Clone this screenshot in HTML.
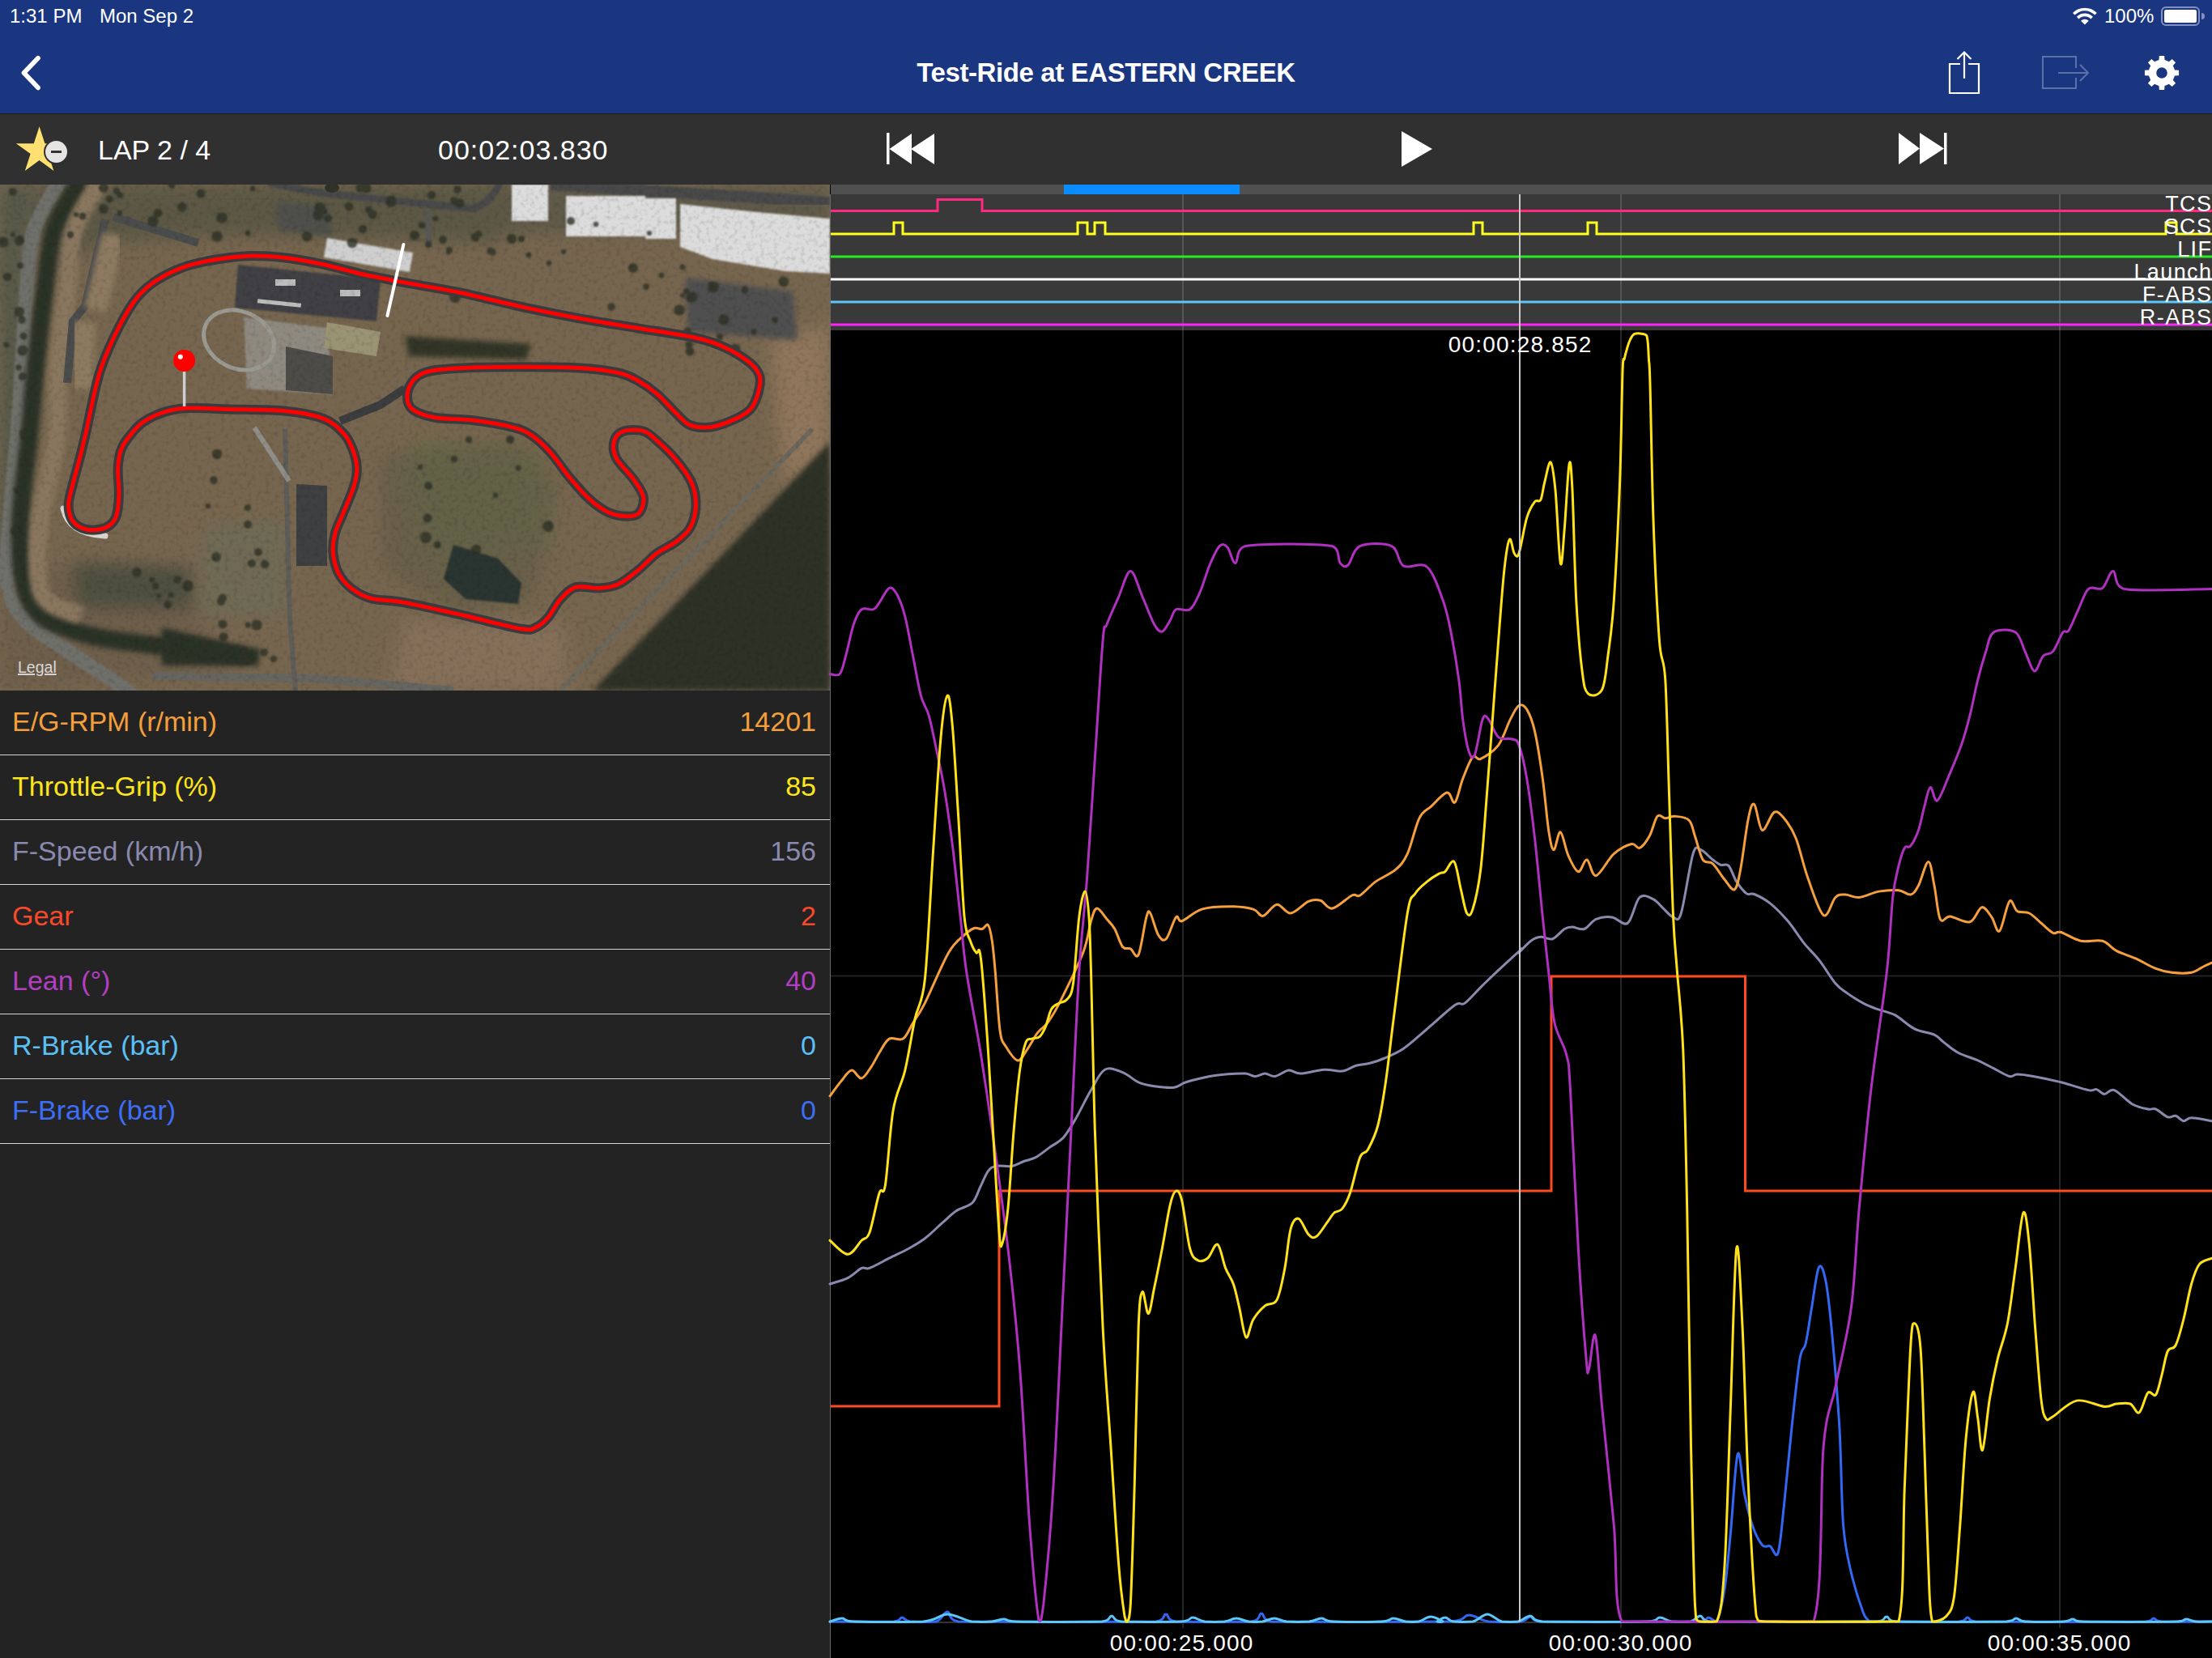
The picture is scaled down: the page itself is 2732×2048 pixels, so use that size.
<!DOCTYPE html>
<html><head><meta charset="utf-8">
<style>
html,body{margin:0;padding:0;}
body{width:2732px;height:2048px;overflow:hidden;position:relative;background:#232323;font-family:"Liberation Sans",sans-serif;}
.abs{position:absolute;}
#hdr{left:0;top:0;width:2732px;height:140px;background:#1b3680;}
#tb{left:0;top:140px;width:2732px;height:88px;background:#303030;border-top:1px solid #1e1e1e;box-sizing:border-box;}
.st{color:#fff;font-size:24px;top:6px;white-space:nowrap;line-height:28px;}
#title{color:#fff;font-size:33px;letter-spacing:-0.4px;font-weight:bold;top:70px;left:0;width:2732px;text-align:center;line-height:40px;}
.tbt{color:#fff;font-size:34px;line-height:40px;white-space:nowrap;top:165px;}
#map{left:0;top:228px;width:1025px;height:625px;overflow:hidden;}
#list{left:0;top:853px;width:1025px;}
.row{position:relative;height:79px;border-bottom:1px solid #d8d8d8;}
.row span{position:absolute;top:18px;font-size:34px;line-height:40px;white-space:nowrap;}
.row .l{left:15px;}
.row .r{right:17px;}
#chart{left:1025px;top:228px;width:1707px;height:1820px;background:#000;}
</style></head>
<body>
<div id="hdr" class="abs"></div>
<div class="abs st" style="left:12px;">1:31 PM</div>
<div class="abs st" style="left:123px;">Mon Sep 2</div>
<div class="abs st" style="left:2599px;">100%</div>
<svg class="abs" style="left:0;top:0" width="2732" height="140" viewBox="0 0 2732 140">
  <!-- back chevron -->
  <polyline points="47,71.8 29.5,90 47,108.3" fill="none" stroke="#fff" stroke-width="5.8" stroke-linecap="round" stroke-linejoin="round"/>
  <!-- wifi -->
  <path fill="#fff" d="M2574.90,30.50 L2570.01,25.78 A6.80,6.80 0 0 1 2579.79,25.78 Z M2564.83,20.77 A14.00,14.00 0 0 1 2584.97,20.77 L2582.24,23.41 A10.20,10.20 0 0 0 2567.56,23.41 Z M2559.94,16.05 A20.80,20.80 0 0 1 2589.86,16.05 L2587.27,18.55 A17.20,17.20 0 0 0 2562.53,18.55 Z"/>
  <!-- battery -->
  <rect x="2670" y="9" width="46" height="22" rx="5" ry="5" fill="none" stroke="#8190bf" stroke-width="2"/>
  <rect x="2673" y="12" width="40" height="16" rx="2.5" ry="2.5" fill="#fff"/>
  <path d="M2719,16 A4,4 0 0 1 2719,24 Z" fill="#8190bf"/>
  <!-- share -->
  <g fill="none" stroke="#fff" stroke-width="2.2">
    <path d="M2421,79 L2408,79 L2408,115 L2444,115 L2444,79 L2431,79"/>
    <path d="M2426,97 L2426,65"/>
    <path d="M2417.5,73 L2426,64.5 L2434.5,73"/>
  </g>
  <!-- export (disabled) -->
  <g fill="none" stroke="#5d71a8" stroke-width="2">
    <path d="M2564,84 L2564,70 L2523,70 L2523,109 L2564,109 L2564,96"/>
    <path d="M2542,90 L2579,90"/>
    <path d="M2569,80 L2579,90 L2569,100"/>
  </g>
  <!-- gear -->
  <g transform="translate(2670,90)">
    <path id="gearp" fill="#fff" fill-rule="evenodd" d="M-3.53,-15.91 L-3.15,-21.07 L3.15,-21.07 L3.53,-15.91 A18.75,18.75 0 0 1 8.76,-13.75 L12.67,-17.12 L17.12,-12.67 L13.75,-8.76 A18.75,18.75 0 0 1 15.91,-3.53 L21.07,-3.15 L21.07,3.15 L15.91,3.53 A18.75,18.75 0 0 1 13.75,8.76 L17.12,12.67 L12.67,17.12 L8.76,13.75 A18.75,18.75 0 0 1 3.53,15.91 L3.15,21.07 L-3.15,21.07 L-3.53,15.91 A18.75,18.75 0 0 1 -8.76,13.75 L-12.67,17.12 L-17.12,12.67 L-13.75,8.76 A18.75,18.75 0 0 1 -15.91,3.53 L-21.07,3.15 L-21.07,-3.15 L-15.91,-3.53 A18.75,18.75 0 0 1 -13.75,-8.76 L-17.12,-12.67 L-12.67,-17.12 L-8.76,-13.75 A18.75,18.75 0 0 1 -3.53,-15.91 Z M6.80,0 A6.80,6.80 0 1 0 -6.80,0 A6.80,6.80 0 1 0 6.80,0Z"/>
  </g>
</svg>
<div id="title" class="abs">Test-Ride at EASTERN CREEK</div>

<div id="tb" class="abs"></div>
<svg class="abs" style="left:0;top:140px" width="2732" height="88" viewBox="0 140 2732 88">
  <!-- star -->
  <path fill="#ffe070" d="M48.60,156.30 L55.38,177.17 L77.32,177.17 L59.57,190.06 L66.35,210.93 L48.60,198.04 L30.85,210.93 L37.63,190.06 L19.88,177.17 L41.82,177.17Z"/>
  <circle cx="69.5" cy="187.5" r="15.5" fill="#303030"/>
  <circle cx="69.5" cy="187.5" r="13.5" fill="#e6e4e2"/>
  <rect x="63" y="186" width="13" height="3" fill="#333"/>
  <!-- rewind -->
  <rect x="1095" y="164" width="3.5" height="39" fill="#fff"/>
  <path fill="#fff" d="M1098.5,184 L1126,165 L1126,203 Z M1125,184 L1154,165 L1154,203 Z"/>
  <!-- play -->
  <path fill="#fff" d="M1731,162 L1769,184 L1731,206 Z"/>
  <!-- ff -->
  <path fill="#fff" d="M2345,164 L2371,183.5 L2345,203 Z M2371,164 L2401,183.5 L2371,203 Z"/>
  <rect x="2401" y="164" width="3.5" height="39" fill="#fff"/>
</svg>
<div class="abs tbt" style="left:121px;">LAP 2 / 4</div>
<div class="abs tbt" style="left:541px;letter-spacing:1px;">00:02:03.830</div>

<div id="map" class="abs"><svg width="1025" height="625" viewBox="0 228 1025 625" style="display:block">
<defs>
  <filter id="bl8" x="-20%" y="-20%" width="140%" height="140%"><feGaussianBlur stdDeviation="10"/></filter>
  <filter id="bl3" x="-20%" y="-20%" width="140%" height="140%"><feGaussianBlur stdDeviation="3"/></filter>
  <filter id="bl1"><feGaussianBlur stdDeviation="1.2"/></filter>
  <filter id="noise" x="0" y="0" width="100%" height="100%">
    <feTurbulence type="fractalNoise" baseFrequency="0.18" numOctaves="2" seed="4" result="t"/>
    <feColorMatrix type="matrix" values="0 0 0 0 0  0 0 0 0 0  0 0 0 0 0  0 0 0 -1.6 0.85" />
  </filter>
</defs>
<rect x="0" y="228" width="1025" height="625" fill="#77664f"/>
<!-- broad tonal regions -->
<g filter="url(#bl8)">
  <rect x="0" y="228" width="1025" height="60" fill="#5f5a48"/>
  <path d="M60,228 L640,228 L620,300 L300,290 L120,300 L70,340 Z" fill="#5b5845"/>
  <path d="M0,228 L30,228 L25,853 L0,853 Z" fill="#55584a"/>
  <path d="M512,542 L668,560 L680,674 L540,690 L500,600 Z" fill="#6b6a4c"/>
  <path d="M0,700 L90,700 L240,760 L300,830 L0,853 Z" fill="#6e5f4c"/>
  <path d="M500,765 L700,770 L700,853 L480,853 Z" fill="#85705a"/>
  <path d="M950,420 L1025,400 L1025,560 L970,600 Z" fill="#8f765c"/>
  <path d="M90,694 L235,700 L240,753 L95,750 Z" fill="#4f5040"/>
  <path d="M250,650 L350,640 L350,760 L250,760 Z" fill="#6f6a55"/>
</g>
<!-- forest -->
<g filter="url(#bl3)">
  <path d="M1025,546 L1025,853 L732,853 Z" fill="#2d3128"/>
</g>
<!-- highway + treeband -->
<path d="M75.0,222.0 C69.5,232.3 49.0,261.0 42.0,284.0 C35.0,307.0 35.5,331.7 33.0,360.0 C30.5,388.3 29.0,424.0 27.0,454.0 C25.0,484.0 23.5,508.7 21.0,540.0 C18.5,571.3 14.0,612.3 12.0,642.0 C10.0,671.7 6.0,697.5 9.0,718.0 C12.0,738.5 16.8,750.2 30.0,765.0 C43.2,779.8 68.7,793.7 88.0,807.0 C107.3,820.3 131.5,834.5 146.0,845.0 C160.5,855.5 170.2,865.8 175.0,870.0" fill="none" stroke="#70706b" stroke-width="18" filter="url(#bl1)"/>
<path d="M188,835 L388,838 L480,846 L560,853" fill="none" stroke="#66655f" stroke-width="10"/>
<path d="M100.0,222.0 C94.5,232.3 74.5,261.0 67.0,284.0 C59.5,307.0 58.8,331.7 55.0,360.0 C51.2,388.3 47.2,424.0 44.0,454.0 C40.8,484.0 39.2,508.7 36.0,540.0 C32.8,571.3 26.2,612.3 25.0,642.0 C23.8,671.7 25.2,698.7 29.0,718.0 C32.8,737.3 38.7,748.2 48.0,758.0 C57.3,767.8 71.3,771.8 85.0,777.0 C98.7,782.2 110.8,785.5 130.0,789.0 C149.2,792.5 168.3,794.2 200.0,798.0 C231.7,801.8 300.0,809.7 320.0,812.0" fill="none" stroke="#2b3126" stroke-width="22" filter="url(#bl3)"/>
<path d="M125.0,222.0 C119.5,232.3 99.0,261.0 92.0,284.0 C85.0,307.0 86.3,331.7 83.0,360.0 C79.7,388.3 74.2,424.0 72.0,454.0 C69.8,484.0 73.7,508.7 70.0,540.0 C66.3,571.3 53.7,612.3 50.0,642.0 C46.3,671.7 46.0,700.8 48.0,718.0 C50.0,735.2 53.3,738.0 62.0,745.0 C70.7,752.0 93.7,757.5 100.0,760.0" fill="none" stroke="#8a775e" stroke-width="22" filter="url(#bl3)"/>
<path d="M1003,530 L692,853" stroke="#6d685c" stroke-width="6" fill="none"/>
<path d="M352.0,530.0 C352.5,550.0 354.0,611.7 355.0,650.0 C356.0,688.3 356.3,726.2 358.0,760.0 C359.7,793.8 363.8,837.5 365.0,853.0" fill="none" stroke="#5e5d58" stroke-width="6"/>
<!-- top road -->
<path d="M332,226 Q380,236 411,240 L585,258 Q605,250 618,226" stroke="#4a4a4a" stroke-width="9" fill="none" filter="url(#bl1)"/>
<path d="M340,250 L405,255 L410,292 L345,285 Z" fill="#4f4f4c" filter="url(#bl3)"/>
<path d="M528,258 L530,305" stroke="#575754" stroke-width="7" fill="none"/>
<path d="M680,228 L1025,250" stroke="#4a4a4a" stroke-width="14" fill="none" filter="url(#bl1)"/>
<ellipse cx="410" cy="232" rx="9" ry="6" fill="#2f3328"/>
<!-- drag strip -->
<path d="M130,271 L105,378 L90,397 L83,473" stroke="#4b4c4c" stroke-width="10" fill="none"/>
<path d="M140,268 L245,300" stroke="#4b4c4c" stroke-width="10" fill="none"/>
<path d="M140,290 L118,382 M104,398 L100,480" stroke="#8d7a60" stroke-width="28" fill="none" filter="url(#bl3)"/>
<!-- buildings -->
<g fill="#dcdcdc" filter="url(#bl1)">
  <rect x="632" y="228" width="45" height="45"/>
  <rect x="699" y="242" width="98" height="50"/>
  <rect x="797" y="245" width="38" height="50"/>
  <path d="M840,252 L935,262 L1025,270 L1025,338 L970,335 L880,320 L840,305 Z"/>
</g>
<path d="M404,294 L510,312 L506,336 L400,318 Z" fill="#cfcfcf" filter="url(#bl1)"/>
<!-- paddock -->
<path d="M294,327 L470,345 L465,397 L290,380 Z" fill="#3f4144" filter="url(#bl1)"/>
<g fill="#bdbdbd"><rect x="340" y="345" width="25" height="8"/><rect x="420" y="358" width="25" height="8"/><rect x="318" y="372" width="54" height="5" transform="rotate(6 345 374)"/></g>
<!-- concrete lot -->
<path d="M301,392 L404,405 L411,487 L305,480 Z" fill="#8e8a80" filter="url(#bl1)"/>
<path d="M353,428 L411,440 L411,487 L353,482 Z" fill="#4d4c48"/>
<path d="M404,398 L470,410 L465,440 L400,430 Z" fill="#9a9474"/>
<!-- kart track -->
<ellipse cx="295" cy="420" rx="45" ry="35" fill="none" stroke="#9a9a92" stroke-width="5" transform="rotate(25 295 420)"/>
<!-- parking lot right -->
<path d="M847,343 L979,360 L985,420 L850,410 Z" fill="#505050" filter="url(#bl3)"/>
<path d="M366,598 L404,600 L404,699 L366,699 Z" fill="#3f4042"/>
<!-- dark tree cluster -->
<path d="M500,415 L656,425 L650,444 L505,440 Z" fill="#303628" filter="url(#bl3)"/>
<path d="M200,775 L306,800 L306,822 L200,822 Z" fill="#2b3126" filter="url(#bl3)"/>
<path d="M314,528 L357,594" stroke="#8f8e88" stroke-width="6" fill="none"/>
<path d="M470,560 L640,545 L690,600 L660,740 L560,760 L470,700 Z" fill="#5f5c45" opacity="0.55" filter="url(#bl8)"/>
<!-- pond -->
<path d="M560,673 L615,690 L644,720 L640,746 L575,740 L548,715 Z" fill="#2a3430" filter="url(#bl1)"/>
<!-- inner roads near track -->
<path d="M420,520 L470,500 L500,480" stroke="#3c3d3f" stroke-width="10" fill="none"/>
<!-- trees -->
<g fill="#2e3326" opacity="0.8" filter="url(#bl1)"><circle cx="248" cy="239" r="5.6"/><circle cx="102" cy="267" r="4.5"/><circle cx="94" cy="265" r="3.1"/><circle cx="312" cy="233" r="3.4"/><circle cx="306" cy="288" r="3.5"/><circle cx="189" cy="273" r="6.8"/><circle cx="395" cy="257" r="6.9"/><circle cx="87" cy="290" r="4.2"/><circle cx="144" cy="236" r="4.2"/><circle cx="533" cy="241" r="5.3"/><circle cx="431" cy="255" r="5.2"/><circle cx="96" cy="232" r="3.8"/><circle cx="455" cy="259" r="4.3"/><circle cx="400" cy="261" r="4.2"/><circle cx="521" cy="278" r="4.0"/><circle cx="393" cy="266" r="6.5"/><circle cx="483" cy="249" r="6.9"/><circle cx="128" cy="258" r="6.0"/><circle cx="148" cy="263" r="3.2"/><circle cx="448" cy="283" r="5.3"/><circle cx="568" cy="251" r="5.8"/><circle cx="405" cy="270" r="4.8"/><circle cx="547" cy="296" r="4.9"/><circle cx="445" cy="232" r="5.8"/><circle cx="435" cy="300" r="6.3"/><circle cx="225" cy="256" r="5.7"/><circle cx="73" cy="261" r="3.7"/><circle cx="128" cy="232" r="6.1"/><circle cx="135" cy="246" r="4.6"/><circle cx="565" cy="234" r="4.8"/><circle cx="379" cy="292" r="6.3"/><circle cx="561" cy="248" r="4.7"/><circle cx="268" cy="292" r="6.8"/><circle cx="148" cy="241" r="3.9"/><circle cx="195" cy="263" r="5.4"/><circle cx="212" cy="228" r="4.7"/><circle cx="274" cy="269" r="6.8"/><circle cx="460" cy="265" r="5.5"/><circle cx="452" cy="232" r="6.6"/><circle cx="512" cy="291" r="6.2"/><circle cx="653" cy="315" r="3.4"/><circle cx="736" cy="277" r="3.3"/><circle cx="591" cy="289" r="4.4"/><circle cx="538" cy="270" r="3.6"/><circle cx="554" cy="311" r="3.1"/><circle cx="817" cy="340" r="3.6"/><circle cx="606" cy="310" r="4.5"/><circle cx="562" cy="367" r="7.0"/><circle cx="678" cy="325" r="3.3"/><circle cx="555" cy="309" r="4.1"/><circle cx="802" cy="288" r="3.1"/><circle cx="843" cy="330" r="3.6"/><circle cx="705" cy="273" r="5.1"/><circle cx="853" cy="368" r="5.8"/><circle cx="609" cy="312" r="3.7"/><circle cx="782" cy="331" r="6.1"/><circle cx="632" cy="295" r="6.2"/><circle cx="855" cy="367" r="6.2"/><circle cx="798" cy="354" r="3.9"/><circle cx="696" cy="311" r="3.1"/><circle cx="529" cy="302" r="4.0"/><circle cx="755" cy="379" r="4.8"/><circle cx="839" cy="383" r="6.8"/><circle cx="644" cy="295" r="3.9"/><circle cx="587" cy="293" r="5.5"/><circle cx="27" cy="625" r="4.9"/><circle cx="20" cy="605" r="3.3"/><circle cx="20" cy="657" r="6.1"/><circle cx="23" cy="454" r="3.7"/><circle cx="24" cy="385" r="6.2"/><circle cx="29" cy="415" r="4.6"/><circle cx="28" cy="570" r="3.7"/><circle cx="4" cy="299" r="6.6"/><circle cx="24" cy="297" r="6.3"/><circle cx="29" cy="538" r="4.4"/><circle cx="16" cy="290" r="3.1"/><circle cx="29" cy="535" r="5.1"/><circle cx="28" cy="433" r="6.5"/><circle cx="25" cy="328" r="4.0"/><circle cx="9" cy="342" r="5.3"/><circle cx="8" cy="426" r="3.5"/><circle cx="27" cy="395" r="4.8"/><circle cx="18" cy="655" r="4.7"/><circle cx="28" cy="465" r="5.1"/><circle cx="16" cy="237" r="4.8"/><circle cx="268" cy="561" r="6.2"/><circle cx="267" cy="688" r="5.9"/><circle cx="306" cy="648" r="5.1"/><circle cx="306" cy="772" r="3.4"/><circle cx="306" cy="627" r="4.1"/><circle cx="327" cy="697" r="5.2"/><circle cx="326" cy="806" r="4.8"/><circle cx="311" cy="696" r="5.0"/><circle cx="319" cy="682" r="5.1"/><circle cx="298" cy="814" r="5.8"/><circle cx="338" cy="814" r="4.0"/><circle cx="306" cy="815" r="6.4"/><circle cx="264" cy="593" r="4.8"/><circle cx="257" cy="625" r="3.3"/><circle cx="317" cy="772" r="6.6"/><circle cx="528" cy="640" r="5.6"/><circle cx="526" cy="664" r="6.9"/><circle cx="540" cy="673" r="4.6"/><circle cx="588" cy="679" r="6.3"/><circle cx="529" cy="600" r="5.1"/><circle cx="561" cy="567" r="4.3"/><circle cx="630" cy="543" r="5.2"/><circle cx="579" cy="543" r="4.3"/><circle cx="612" cy="612" r="3.3"/><circle cx="677" cy="650" r="6.9"/><circle cx="519" cy="577" r="3.2"/><circle cx="640" cy="578" r="3.5"/><circle cx="908" cy="431" r="6.3"/><circle cx="881" cy="355" r="6.7"/><circle cx="931" cy="410" r="3.4"/><circle cx="849" cy="409" r="4.7"/><circle cx="852" cy="434" r="5.5"/><circle cx="968" cy="348" r="6.4"/><circle cx="851" cy="426" r="4.8"/><circle cx="894" cy="395" r="6.7"/><circle cx="883" cy="353" r="5.1"/><circle cx="878" cy="351" r="3.6"/><circle cx="848" cy="360" r="4.2"/><circle cx="889" cy="416" r="4.2"/><circle cx="920" cy="358" r="4.4"/><circle cx="843" cy="365" r="3.1"/><circle cx="957" cy="395" r="3.8"/><circle cx="221" cy="793" r="3.4"/><circle cx="273" cy="743" r="5.0"/><circle cx="275" cy="739" r="5.0"/><circle cx="253" cy="798" r="4.4"/><circle cx="275" cy="771" r="5.5"/><circle cx="211" cy="735" r="3.2"/><circle cx="169" cy="707" r="6.0"/><circle cx="188" cy="716" r="3.3"/><circle cx="276" cy="787" r="5.7"/><circle cx="192" cy="724" r="4.2"/><circle cx="219" cy="716" r="4.8"/><circle cx="189" cy="796" r="6.9"/><circle cx="232" cy="724" r="6.9"/><circle cx="196" cy="736" r="3.0"/><circle cx="207" cy="747" r="5.0"/></g>
<path d="M78,628 Q85,660 130,662" fill="none" stroke="#d8d6d0" stroke-width="7" stroke-linecap="round"/>
<!-- noise overlay -->
<rect x="0" y="228" width="1025" height="625" filter="url(#noise)" opacity="0.18"/>
<!-- track asphalt + red -->
<path d="M493.7,347.9 C505.9,350.2 507.0,350.2 520.0,352.6 C533.0,355.0 551.3,357.8 571.9,362.2 C592.5,366.6 619.8,373.7 643.7,378.9 C667.7,384.1 691.6,388.9 715.6,393.3 C739.6,397.7 763.5,401.3 787.5,405.3 C811.5,409.3 841.4,413.3 859.4,417.3 C877.4,421.3 884.1,424.0 895.3,429.2 C906.5,434.4 919.3,442.4 926.5,448.4 C933.7,454.4 936.8,458.8 938.4,465.2 C940.0,471.6 938.0,479.9 936.0,486.7 C934.0,493.5 931.3,500.7 926.5,505.9 C921.7,511.1 915.3,514.3 907.3,517.9 C899.3,521.5 887.7,526.3 878.5,527.5 C869.3,528.7 859.4,527.9 852.2,525.1 C845.0,522.3 842.2,517.2 835.4,510.8 C828.6,504.4 819.5,493.5 811.5,486.7 C803.5,479.9 795.5,474.4 787.5,470.0 C779.5,465.6 775.5,463.0 763.5,460.4 C751.5,457.8 735.6,455.6 715.6,454.4 C695.6,453.2 667.7,453.2 643.7,453.2 C619.8,453.2 591.9,453.2 571.9,454.4 C551.9,455.6 535.2,456.2 524.0,460.4 C512.8,464.6 507.6,472.3 504.8,479.5 C502.0,486.7 502.0,497.5 507.2,503.5 C512.4,509.5 523.1,512.9 535.9,515.5 C548.7,518.1 567.9,517.1 583.9,519.1 C599.9,521.1 619.8,524.5 631.8,527.5 C643.8,530.5 647.7,532.0 655.7,537.2 C663.7,542.4 671.7,549.9 679.7,558.7 C687.7,567.5 695.6,580.3 703.6,589.9 C711.6,599.5 719.6,609.0 727.6,616.2 C735.6,623.4 743.6,629.4 751.6,633.0 C759.6,636.6 769.1,637.8 775.5,637.8 C781.9,637.8 786.7,637.0 789.9,633.0 C793.1,629.0 795.9,620.6 794.7,613.8 C793.5,607.0 788.3,600.3 782.7,592.3 C777.1,584.3 765.1,573.9 761.1,565.9 C757.1,557.9 757.1,550.0 758.7,544.4 C760.3,538.8 764.7,534.4 770.7,532.4 C776.7,530.4 787.9,530.4 794.7,532.4 C801.5,534.4 804.7,538.4 811.5,544.4 C818.3,550.4 828.2,559.5 835.4,568.3 C842.6,577.1 850.6,587.5 854.6,597.1 C858.6,606.7 859.8,616.6 859.4,625.8 C859.0,635.0 856.2,645.0 852.2,652.2 C848.2,659.4 842.2,663.8 835.4,669.0 C828.6,674.2 819.5,677.3 811.5,683.3 C803.5,689.3 795.5,698.5 787.5,704.9 C779.5,711.3 771.5,718.1 763.5,721.7 C755.5,725.3 748.4,725.9 739.6,726.5 C730.8,727.1 718.8,722.9 710.8,725.3 C702.8,727.7 697.3,734.6 691.7,740.8 C686.1,747.0 682.1,756.8 677.3,762.4 C672.5,768.0 668.5,772.0 662.9,774.4 C657.3,776.8 658.9,779.2 643.7,776.8 C628.5,774.4 595.9,765.4 571.9,760.0 C547.9,754.6 518.9,747.9 500.0,744.4 C481.1,740.9 469.2,742.0 458.4,739.2 C447.5,736.4 441.6,732.6 434.9,727.5 C428.2,722.4 422.3,716.1 418.4,708.6 C414.5,701.1 412.2,691.0 411.4,682.8 C410.6,674.6 411.8,667.1 413.7,659.3 C415.6,651.5 419.2,645.6 423.1,635.8 C427.0,626.0 434.2,610.3 437.2,600.5 C440.1,590.7 441.2,584.8 440.8,577.0 C440.4,569.2 437.7,560.5 434.9,553.5 C432.1,546.5 429.9,541.1 424.0,535.0 C418.1,528.9 411.5,521.6 399.6,517.1 C387.7,512.6 372.2,509.6 352.6,507.7 C333.0,505.8 302.8,506.0 282.0,505.4 C261.2,504.8 241.7,503.4 228.0,504.2 C214.3,505.0 208.4,507.1 199.8,510.0 C191.2,512.9 182.4,517.6 176.3,521.8 C170.2,526.0 167.3,529.7 163.0,535.0 C158.7,540.3 153.3,546.5 150.4,553.5 C147.5,560.5 146.3,567.2 145.7,577.0 C145.1,586.8 147.3,602.1 146.9,612.3 C146.5,622.5 145.6,631.8 143.4,638.1 C141.2,644.4 138.3,647.1 134.0,649.9 C129.7,652.6 123.0,654.2 117.5,654.6 C112.0,655.0 105.8,654.2 101.1,652.2 C96.4,650.2 92.0,647.5 89.3,642.8 C86.5,638.1 84.6,631.0 84.6,624.0 C84.6,617.0 86.9,610.3 89.3,600.5 C91.7,590.7 95.9,576.2 98.7,565.3 C101.5,554.4 102.1,552.0 106.0,535.0 C109.9,518.0 116.4,482.8 122.2,463.0 C128.0,443.2 133.9,430.9 141.0,416.0 C148.1,401.1 156.8,384.7 164.6,373.7 C172.4,362.7 178.3,357.1 188.0,350.0 C197.7,342.9 211.2,336.1 223.0,331.4 C234.8,326.7 244.8,324.5 258.6,322.0 C272.4,319.5 289.9,316.8 305.6,316.2 C321.3,315.6 336.9,316.8 352.6,318.5 C368.3,320.2 383.9,323.4 399.6,326.7 C415.3,330.0 430.9,335.0 446.6,338.5 C462.3,342.0 481.5,345.5 493.7,347.9Z" fill="none" stroke="#3a3b3d" stroke-width="12"/>
<path d="M493.7,347.9 C505.9,350.2 507.0,350.2 520.0,352.6 C533.0,355.0 551.3,357.8 571.9,362.2 C592.5,366.6 619.8,373.7 643.7,378.9 C667.7,384.1 691.6,388.9 715.6,393.3 C739.6,397.7 763.5,401.3 787.5,405.3 C811.5,409.3 841.4,413.3 859.4,417.3 C877.4,421.3 884.1,424.0 895.3,429.2 C906.5,434.4 919.3,442.4 926.5,448.4 C933.7,454.4 936.8,458.8 938.4,465.2 C940.0,471.6 938.0,479.9 936.0,486.7 C934.0,493.5 931.3,500.7 926.5,505.9 C921.7,511.1 915.3,514.3 907.3,517.9 C899.3,521.5 887.7,526.3 878.5,527.5 C869.3,528.7 859.4,527.9 852.2,525.1 C845.0,522.3 842.2,517.2 835.4,510.8 C828.6,504.4 819.5,493.5 811.5,486.7 C803.5,479.9 795.5,474.4 787.5,470.0 C779.5,465.6 775.5,463.0 763.5,460.4 C751.5,457.8 735.6,455.6 715.6,454.4 C695.6,453.2 667.7,453.2 643.7,453.2 C619.8,453.2 591.9,453.2 571.9,454.4 C551.9,455.6 535.2,456.2 524.0,460.4 C512.8,464.6 507.6,472.3 504.8,479.5 C502.0,486.7 502.0,497.5 507.2,503.5 C512.4,509.5 523.1,512.9 535.9,515.5 C548.7,518.1 567.9,517.1 583.9,519.1 C599.9,521.1 619.8,524.5 631.8,527.5 C643.8,530.5 647.7,532.0 655.7,537.2 C663.7,542.4 671.7,549.9 679.7,558.7 C687.7,567.5 695.6,580.3 703.6,589.9 C711.6,599.5 719.6,609.0 727.6,616.2 C735.6,623.4 743.6,629.4 751.6,633.0 C759.6,636.6 769.1,637.8 775.5,637.8 C781.9,637.8 786.7,637.0 789.9,633.0 C793.1,629.0 795.9,620.6 794.7,613.8 C793.5,607.0 788.3,600.3 782.7,592.3 C777.1,584.3 765.1,573.9 761.1,565.9 C757.1,557.9 757.1,550.0 758.7,544.4 C760.3,538.8 764.7,534.4 770.7,532.4 C776.7,530.4 787.9,530.4 794.7,532.4 C801.5,534.4 804.7,538.4 811.5,544.4 C818.3,550.4 828.2,559.5 835.4,568.3 C842.6,577.1 850.6,587.5 854.6,597.1 C858.6,606.7 859.8,616.6 859.4,625.8 C859.0,635.0 856.2,645.0 852.2,652.2 C848.2,659.4 842.2,663.8 835.4,669.0 C828.6,674.2 819.5,677.3 811.5,683.3 C803.5,689.3 795.5,698.5 787.5,704.9 C779.5,711.3 771.5,718.1 763.5,721.7 C755.5,725.3 748.4,725.9 739.6,726.5 C730.8,727.1 718.8,722.9 710.8,725.3 C702.8,727.7 697.3,734.6 691.7,740.8 C686.1,747.0 682.1,756.8 677.3,762.4 C672.5,768.0 668.5,772.0 662.9,774.4 C657.3,776.8 658.9,779.2 643.7,776.8 C628.5,774.4 595.9,765.4 571.9,760.0 C547.9,754.6 518.9,747.9 500.0,744.4 C481.1,740.9 469.2,742.0 458.4,739.2 C447.5,736.4 441.6,732.6 434.9,727.5 C428.2,722.4 422.3,716.1 418.4,708.6 C414.5,701.1 412.2,691.0 411.4,682.8 C410.6,674.6 411.8,667.1 413.7,659.3 C415.6,651.5 419.2,645.6 423.1,635.8 C427.0,626.0 434.2,610.3 437.2,600.5 C440.1,590.7 441.2,584.8 440.8,577.0 C440.4,569.2 437.7,560.5 434.9,553.5 C432.1,546.5 429.9,541.1 424.0,535.0 C418.1,528.9 411.5,521.6 399.6,517.1 C387.7,512.6 372.2,509.6 352.6,507.7 C333.0,505.8 302.8,506.0 282.0,505.4 C261.2,504.8 241.7,503.4 228.0,504.2 C214.3,505.0 208.4,507.1 199.8,510.0 C191.2,512.9 182.4,517.6 176.3,521.8 C170.2,526.0 167.3,529.7 163.0,535.0 C158.7,540.3 153.3,546.5 150.4,553.5 C147.5,560.5 146.3,567.2 145.7,577.0 C145.1,586.8 147.3,602.1 146.9,612.3 C146.5,622.5 145.6,631.8 143.4,638.1 C141.2,644.4 138.3,647.1 134.0,649.9 C129.7,652.6 123.0,654.2 117.5,654.6 C112.0,655.0 105.8,654.2 101.1,652.2 C96.4,650.2 92.0,647.5 89.3,642.8 C86.5,638.1 84.6,631.0 84.6,624.0 C84.6,617.0 86.9,610.3 89.3,600.5 C91.7,590.7 95.9,576.2 98.7,565.3 C101.5,554.4 102.1,552.0 106.0,535.0 C109.9,518.0 116.4,482.8 122.2,463.0 C128.0,443.2 133.9,430.9 141.0,416.0 C148.1,401.1 156.8,384.7 164.6,373.7 C172.4,362.7 178.3,357.1 188.0,350.0 C197.7,342.9 211.2,336.1 223.0,331.4 C234.8,326.7 244.8,324.5 258.6,322.0 C272.4,319.5 289.9,316.8 305.6,316.2 C321.3,315.6 336.9,316.8 352.6,318.5 C368.3,320.2 383.9,323.4 399.6,326.7 C415.3,330.0 430.9,335.0 446.6,338.5 C462.3,342.0 481.5,345.5 493.7,347.9Z" fill="none" stroke="#ff0000" stroke-width="5"/>
<!-- start line -->
<line x1="498.4" y1="302" x2="478.4" y2="390" stroke="#fff" stroke-width="4" stroke-linecap="round"/>
<!-- pin -->
<line x1="227.6" y1="458" x2="227.6" y2="502" stroke="#cfcfcf" stroke-width="3.5"/>
<circle cx="227.6" cy="445.4" r="13.5" fill="#ff0000"/>
<circle cx="222.8" cy="440.7" r="3" fill="#fff"/>
<text x="22" y="831" font-family="Liberation Sans" font-size="19.5" fill="#d8d8d8" text-decoration="underline">Legal</text>
</svg></div>

<div id="list" class="abs">
  <div class="row"><span class="l" style="color:#f39f3b">E/G-RPM (r/min)</span><span class="r" style="color:#f39f3b">14201</span></div>
  <div class="row"><span class="l" style="color:#fde51b">Throttle-Grip (%)</span><span class="r" style="color:#fde51b">85</span></div>
  <div class="row"><span class="l" style="color:#8a8ab0">F-Speed (km/h)</span><span class="r" style="color:#8a8ab0">156</span></div>
  <div class="row"><span class="l" style="color:#f84a2a">Gear</span><span class="r" style="color:#f84a2a">2</span></div>
  <div class="row"><span class="l" style="color:#b23fc2">Lean (°)</span><span class="r" style="color:#b23fc2">40</span></div>
  <div class="row"><span class="l" style="color:#5ac0f5">R-Brake (bar)</span><span class="r" style="color:#5ac0f5">0</span></div>
  <div class="row"><span class="l" style="color:#3d6ef5">F-Brake (bar)</span><span class="r" style="color:#3d6ef5">0</span></div>
</div>

<div id="chart" class="abs"></div>
<svg class="abs" style="left:0;top:0" width="2732" height="2048" viewBox="0 0 2732 2048">
  <!-- scrollbar -->
  <rect x="1026" y="228" width="1706" height="12" fill="#505050"/>
  <rect x="1314" y="228" width="217" height="12" fill="#0a8cff"/>
  <!-- events bg -->
  <rect x="1026" y="240" width="1706" height="168" fill="#3a3939"/>
  <line x1="1025.5" y1="240" x2="1025.5" y2="2048" stroke="#6a6a6a" stroke-width="1"/>
  <!-- grid -->
  <g stroke="rgba(255,255,255,0.2)" stroke-width="1.5">
    <line x1="1461" y1="240" x2="1461" y2="2011"/>
    <line x1="2002" y1="240" x2="2002" y2="2011"/>
    <line x1="2544" y1="240" x2="2544" y2="2011"/>
  </g>
  <line x1="1026" y1="1205.5" x2="2732" y2="1205.5" stroke="#2a2a2a" stroke-width="1.5"/>
  <line x1="1026" y1="2004" x2="2732" y2="2004" stroke="#444" stroke-width="1.5"/>
  <!-- event lines -->
  <g fill="none" stroke-width="3">
    <path stroke="#ff2a7f" d="M1026,260.5 L1158,260.5 L1158,246.5 L1213,246.5 L1213,260.5 L2732,260.5"/>
    <path stroke="#ffff1e" d="M1026,289 L1104,289 L1104,275 L1115,275 L1115,289 L1331,289 L1331,275 L1343,275 L1343,289 L1352,289 L1352,275 L1365,275 L1365,289 L1820,289 L1820,275 L1831,275 L1831,289 L1961,289 L1961,275 L1972,275 L1972,289 L2675,289 L2675,275 L2688,275 L2688,289 L2732,289"/>
    <path stroke="#22ee22" d="M1026,317 L2732,317"/>
    <path stroke="#ffffff" d="M1026,345 L2732,345"/>
    <path stroke="#5ac8fa" d="M1026,373 L2732,373"/>
    <path stroke="#ff22ff" d="M1026,401 L2732,401"/>
  </g>
  <g fill="#fff" font-size="27" letter-spacing="1.4" text-anchor="end" font-family="Liberation Sans">
    <text x="2732.4" y="261">TCS</text>
    <text x="2732.4" y="289">SCS</text>
    <text x="2732.4" y="317">LIF</text>
    <text x="2732.4" y="345">Launch</text>
    <text x="2732.4" y="373">F-ABS</text>
    <text x="2732.4" y="401">R-ABS</text>
  </g>
  <!-- series -->
  <g fill="none" stroke-width="3" stroke-linejoin="round" stroke-linecap="round">
    <path stroke="#8a8aae" d="M1025.0,1586.0 C1028.7,1584.7 1040.5,1581.9 1047.0,1578.6 C1053.5,1575.4 1059.6,1568.5 1064.1,1566.4 C1068.6,1564.4 1068.2,1568.5 1073.9,1566.4 C1079.6,1564.4 1090.1,1558.3 1098.3,1554.2 C1106.4,1550.1 1115.4,1546.1 1122.7,1542.0 C1130.0,1537.9 1135.3,1535.1 1142.3,1529.8 C1149.2,1524.5 1157.7,1515.9 1164.2,1510.2 C1170.8,1504.5 1175.2,1499.7 1181.3,1495.6 C1187.4,1491.5 1196.0,1490.7 1200.9,1485.8 C1205.8,1480.9 1207.4,1472.8 1210.7,1466.3 C1213.9,1459.8 1217.2,1451.0 1220.4,1446.7 C1223.7,1442.4 1225.3,1441.4 1230.2,1440.4 C1235.1,1439.3 1244.0,1441.4 1249.7,1440.4 C1255.4,1439.4 1259.5,1436.3 1264.4,1434.5 C1269.3,1432.7 1273.8,1432.5 1279.1,1429.6 C1284.3,1426.8 1290.5,1421.5 1296.2,1417.4 C1301.9,1413.3 1308.0,1410.9 1313.3,1405.2 C1318.5,1399.5 1322.2,1393.0 1327.9,1383.2 C1333.6,1373.4 1341.3,1356.9 1347.5,1346.6 C1353.6,1336.2 1358.0,1324.8 1364.6,1321.2 C1371.1,1317.5 1379.6,1322.0 1386.5,1324.6 C1393.5,1327.2 1399.6,1333.9 1406.1,1336.8 C1412.6,1339.6 1418.3,1340.6 1425.6,1341.7 C1433.0,1342.7 1443.5,1344.0 1450.1,1343.2 C1456.6,1342.3 1457.4,1339.1 1464.7,1336.8 C1472.0,1334.5 1485.9,1331.1 1494.0,1329.5 C1502.2,1327.8 1506.2,1327.6 1513.6,1327.0 C1520.9,1326.5 1531.9,1325.6 1538.0,1326.1 C1544.1,1326.5 1546.1,1329.5 1550.2,1329.5 C1554.3,1329.5 1558.4,1326.1 1562.4,1326.1 C1566.5,1326.1 1569.8,1330.1 1574.6,1329.5 C1579.5,1328.8 1586.4,1322.7 1591.7,1322.1 C1597.0,1321.6 1599.1,1326.2 1606.4,1326.1 C1613.7,1325.9 1627.2,1321.7 1635.7,1321.2 C1644.3,1320.7 1651.2,1323.9 1657.7,1323.1 C1664.2,1322.3 1669.1,1317.9 1674.8,1316.3 C1680.5,1314.7 1686.2,1314.8 1691.9,1313.3 C1697.6,1311.9 1702.1,1310.5 1709.0,1307.5 C1715.9,1304.5 1724.5,1301.4 1733.4,1295.3 C1742.4,1289.2 1752.2,1279.8 1762.7,1270.8 C1773.3,1261.9 1789.2,1246.8 1796.9,1241.5 C1804.7,1236.2 1803.5,1243.2 1809.2,1239.1 C1814.9,1235.0 1823.4,1224.6 1831.1,1217.1 C1838.9,1209.6 1847.4,1201.4 1855.6,1193.9 C1863.7,1186.4 1876.6,1174.8 1880.0,1171.9 C1880.0,1169.1 1876.0,1178.5 1876.0,1176.9 C1877.8,1175.2 1886.2,1165.5 1890.7,1162.2 C1895.1,1158.9 1898.4,1157.7 1902.9,1157.3 C1907.4,1156.9 1912.6,1161.4 1917.5,1159.8 C1922.4,1158.1 1928.1,1150.0 1932.2,1147.5 C1936.3,1145.1 1937.9,1145.1 1942.0,1145.1 C1946.0,1145.1 1951.7,1149.2 1956.6,1147.5 C1961.5,1145.9 1965.6,1137.8 1971.3,1135.3 C1977.0,1132.9 1984.3,1132.1 1990.8,1132.9 C1997.3,1133.7 2004.7,1144.3 2010.4,1140.2 C2016.1,1136.1 2019.7,1113.3 2025.0,1108.5 C2030.3,1103.6 2037.2,1108.6 2042.1,1110.9 C2047.0,1113.2 2050.3,1118.5 2054.3,1122.1 C2058.4,1125.8 2062.9,1131.9 2066.6,1132.9 C2070.2,1133.9 2072.3,1141.0 2076.3,1128.0 C2080.4,1115.0 2086.9,1067.7 2091.0,1054.7 C2095.1,1041.7 2096.7,1048.6 2100.8,1049.8 C2104.8,1051.0 2111.3,1058.9 2115.4,1062.0 C2119.5,1065.1 2121.9,1067.2 2125.2,1068.4 C2128.4,1069.6 2131.7,1066.0 2135.0,1069.4 C2138.2,1072.8 2141.1,1083.2 2144.7,1088.9 C2148.4,1094.6 2153.3,1101.0 2156.9,1103.6 C2160.6,1106.2 2161.8,1102.5 2166.7,1104.5 C2171.6,1106.6 2179.3,1110.2 2186.3,1115.8 C2193.2,1121.3 2201.3,1129.6 2208.2,1137.8 C2215.2,1145.9 2221.3,1156.5 2227.8,1164.6 C2234.3,1172.8 2240.8,1178.3 2247.3,1186.6 C2253.8,1195.0 2261.2,1208.0 2266.9,1214.7 C2272.6,1221.4 2275.8,1222.8 2281.5,1226.9 C2287.2,1230.9 2295.0,1235.8 2301.1,1239.1 C2307.2,1242.3 2311.7,1244.0 2318.2,1246.4 C2324.7,1248.9 2332.4,1249.7 2340.2,1253.7 C2347.9,1257.8 2356.4,1266.8 2364.6,1270.8 C2372.7,1274.9 2382.9,1275.3 2389.0,1278.2 C2395.1,1281.0 2396.3,1284.3 2401.2,1287.9 C2406.1,1291.6 2411.4,1296.5 2418.3,1300.2 C2425.3,1303.8 2435.4,1306.7 2442.8,1309.9 C2450.1,1313.2 2455.8,1316.4 2462.3,1319.7 C2468.8,1323.0 2477.0,1328.3 2481.9,1329.5 C2486.7,1330.7 2486.7,1327.0 2491.6,1327.0 C2496.5,1327.0 2502.2,1327.8 2511.2,1329.5 C2520.1,1331.1 2534.0,1334.0 2545.4,1336.8 C2556.8,1339.7 2572.2,1345.1 2579.6,1346.6 C2586.9,1348.0 2586.1,1344.8 2589.3,1345.6 C2592.6,1346.4 2595.5,1351.3 2599.1,1351.5 C2602.8,1351.6 2605.6,1344.5 2611.3,1346.6 C2617.0,1348.6 2626.4,1359.8 2633.3,1363.7 C2640.2,1367.6 2648.0,1369.0 2652.9,1370.0 C2657.7,1371.1 2658.6,1368.4 2662.6,1370.0 C2666.7,1371.7 2673.2,1378.4 2677.3,1379.8 C2681.4,1381.2 2683.8,1377.5 2687.1,1378.3 C2690.3,1379.2 2693.6,1384.3 2696.8,1384.7 C2700.1,1385.1 2700.7,1380.8 2706.6,1380.8 C2712.5,1380.8 2727.8,1384.0 2732.0,1384.7"/>
    <path stroke="#ff4a1e" stroke-linejoin="miter" stroke-linecap="butt" d="M1026,1737 L1234,1737 L1234,1471 L1916,1471 L1916,1206 L2155.5,1206 L2155.5,1471 L2732,1471"/>
    <path stroke="#f5a03c" d="M1025.0,1353.9 C1027.4,1350.6 1035.2,1339.6 1039.7,1334.4 C1044.1,1329.1 1047.8,1322.5 1051.9,1322.1 C1055.9,1321.7 1060.0,1332.7 1064.1,1331.9 C1068.2,1331.1 1072.6,1322.5 1076.3,1317.3 C1080.0,1312.0 1082.4,1305.9 1086.1,1300.2 C1089.7,1294.5 1093.4,1285.9 1098.3,1283.1 C1103.2,1280.2 1110.5,1286.3 1115.4,1283.1 C1120.3,1279.8 1123.1,1270.8 1127.6,1263.5 C1132.1,1256.2 1134.9,1253.5 1142.3,1239.1 C1149.6,1224.6 1163.4,1190.9 1171.6,1176.8 C1179.7,1162.8 1185.8,1159.9 1191.1,1154.8 C1196.4,1149.8 1199.7,1147.8 1203.3,1146.5 C1207.0,1145.3 1210.2,1148.2 1213.1,1147.5 C1215.9,1146.9 1218.4,1140.2 1220.4,1142.6 C1222.5,1145.1 1223.8,1152.6 1225.3,1162.2 C1226.8,1171.7 1227.6,1181.5 1229.2,1200.0 C1230.8,1218.5 1232.9,1257.8 1235.1,1273.3 C1237.3,1288.8 1238.7,1286.7 1242.4,1292.8 C1246.1,1298.9 1252.6,1309.5 1257.1,1309.9 C1261.5,1310.3 1265.2,1301.0 1269.3,1295.3 C1273.4,1289.6 1277.4,1281.0 1281.5,1275.7 C1285.6,1270.4 1289.2,1269.6 1293.7,1263.5 C1298.2,1257.4 1301.0,1253.5 1308.4,1239.1 C1315.7,1224.6 1331.2,1193.7 1337.7,1176.8 C1344.2,1159.9 1344.6,1146.9 1347.5,1137.7 C1350.3,1128.6 1351.5,1122.5 1354.8,1122.1 C1358.0,1121.7 1363.3,1131.1 1367.0,1135.3 C1370.7,1139.5 1373.5,1141.8 1376.8,1147.5 C1380.0,1153.2 1383.3,1165.4 1386.5,1169.5 C1389.8,1173.6 1393.1,1170.3 1396.3,1171.9 C1399.6,1173.6 1402.8,1185.8 1406.1,1179.3 C1409.3,1172.8 1413.4,1141.4 1415.9,1132.9 C1418.3,1124.3 1418.3,1124.3 1420.7,1128.0 C1423.2,1131.6 1427.3,1149.5 1430.5,1154.8 C1433.8,1160.1 1436.6,1163.4 1440.3,1159.7 C1443.9,1156.1 1449.2,1136.5 1452.5,1132.9 C1455.8,1129.2 1454.5,1139.4 1459.8,1137.7 C1465.1,1136.1 1474.5,1126.1 1484.3,1123.1 C1494.0,1120.1 1507.9,1119.7 1518.5,1119.7 C1529.0,1119.7 1540.8,1121.1 1547.8,1123.1 C1554.7,1125.0 1555.1,1132.4 1560.0,1131.4 C1564.9,1130.4 1571.4,1117.8 1577.1,1117.2 C1582.8,1116.6 1587.7,1128.6 1594.2,1128.0 C1600.7,1127.3 1610.1,1115.9 1616.2,1113.3 C1622.3,1110.7 1625.9,1110.9 1630.8,1112.3 C1635.7,1113.8 1639.0,1123.2 1645.5,1122.1 C1652.0,1121.0 1664.2,1108.7 1669.9,1106.0 C1675.6,1103.3 1674.8,1108.8 1679.7,1106.0 C1684.6,1103.1 1691.9,1094.2 1699.2,1088.9 C1706.6,1083.6 1717.1,1079.9 1723.7,1074.2 C1730.2,1068.5 1733.4,1065.3 1738.3,1054.7 C1743.2,1044.1 1748.1,1020.5 1753.0,1010.7 C1757.9,1000.9 1761.9,1001.3 1767.6,996.1 C1773.3,990.8 1782.3,979.8 1787.2,979.0 C1792.1,978.1 1793.7,994.0 1796.9,991.2 C1800.2,988.3 1803.0,971.2 1806.7,961.9 C1810.4,952.5 1815.3,939.1 1818.9,935.0 C1822.6,930.9 1823.4,939.9 1828.7,937.4 C1834.0,935.0 1844.6,928.5 1850.7,920.3 C1856.8,912.2 1861.1,896.7 1865.3,888.6 C1869.6,880.4 1872.6,873.5 1876.0,871.5 C1879.4,869.5 1882.5,871.1 1885.8,876.4 C1889.0,881.7 1892.3,889.0 1895.5,903.2 C1898.8,917.5 1902.5,941.5 1905.3,961.9 C1908.2,982.2 1910.4,1010.7 1912.6,1025.4 C1914.9,1040.1 1916.6,1049.4 1919.0,1049.8 C1921.4,1050.2 1924.3,1026.6 1927.3,1027.8 C1930.3,1029.1 1933.4,1049.0 1937.1,1057.2 C1940.7,1065.3 1945.5,1075.9 1949.3,1076.7 C1953.1,1077.5 1956.4,1061.2 1960.0,1062.0 C1963.7,1062.9 1965.7,1082.8 1971.3,1081.6 C1976.8,1080.4 1985.9,1061.2 1993.3,1054.7 C2000.6,1048.2 2010.0,1043.7 2015.2,1042.5 C2020.5,1041.3 2021.4,1049.0 2025.0,1047.4 C2028.7,1045.8 2033.6,1039.2 2037.2,1032.7 C2040.9,1026.2 2043.7,1012.0 2047.0,1008.3 C2050.3,1004.6 2053.1,1010.7 2056.8,1010.7 C2060.4,1010.7 2064.1,1007.9 2069.0,1008.3 C2073.9,1008.7 2082.0,1009.1 2086.1,1013.2 C2090.2,1017.3 2090.6,1024.6 2093.4,1032.7 C2096.3,1040.9 2099.5,1056.3 2103.2,1062.0 C2106.9,1067.7 2110.9,1062.9 2115.4,1066.9 C2119.9,1071.0 2125.6,1081.2 2130.1,1086.5 C2134.5,1091.8 2139.0,1100.7 2142.3,1098.7 C2145.5,1096.6 2146.8,1088.9 2149.6,1074.3 C2152.5,1059.6 2156.5,1024.2 2159.4,1010.7 C2162.2,997.3 2163.9,991.2 2166.7,993.6 C2169.6,996.1 2172.4,1023.8 2176.5,1025.4 C2180.6,1027.0 2186.7,1005.9 2191.1,1003.4 C2195.6,1001.0 2198.9,1005.4 2203.4,1010.7 C2207.8,1016.0 2213.1,1023.0 2218.0,1035.2 C2222.9,1047.4 2227.0,1068.1 2232.7,1084.0 C2238.4,1099.9 2246.5,1126.4 2252.2,1130.4 C2257.9,1134.5 2262.4,1112.7 2266.9,1108.5 C2271.4,1104.2 2274.2,1105.0 2279.1,1105.0 C2284.0,1105.0 2289.3,1109.1 2296.2,1108.5 C2303.1,1107.8 2312.5,1102.6 2320.6,1101.1 C2328.8,1099.7 2338.5,1099.0 2345.0,1099.7 C2351.6,1100.3 2355.6,1106.0 2359.7,1105.0 C2363.8,1104.1 2365.8,1100.6 2369.5,1093.8 C2373.1,1087.0 2378.4,1064.5 2381.7,1064.5 C2384.9,1064.5 2386.6,1082.0 2389.0,1093.8 C2391.5,1105.6 2393.1,1129.0 2396.3,1135.3 C2399.6,1141.7 2402.5,1131.3 2408.6,1131.9 C2414.7,1132.5 2426.5,1140.6 2433.0,1138.8 C2439.5,1136.9 2443.2,1121.6 2447.7,1120.7 C2452.1,1119.7 2456.2,1128.0 2459.9,1132.9 C2463.5,1137.8 2466.0,1153.2 2469.6,1150.0 C2473.3,1146.7 2478.2,1117.4 2481.9,1113.3 C2485.5,1109.3 2487.6,1123.1 2491.6,1125.6 C2495.7,1128.0 2501.4,1125.6 2506.3,1128.0 C2511.2,1130.4 2516.1,1136.1 2520.9,1140.2 C2525.8,1144.3 2531.5,1150.6 2535.6,1152.4 C2539.7,1154.3 2539.7,1149.8 2545.4,1151.5 C2551.1,1153.1 2561.2,1160.4 2569.8,1162.2 C2578.4,1164.0 2589.3,1160.2 2596.7,1162.2 C2604.0,1164.2 2606.9,1170.8 2613.8,1174.4 C2620.7,1178.1 2630.1,1180.5 2638.2,1184.2 C2646.3,1187.9 2655.3,1193.6 2662.6,1196.4 C2670.0,1199.3 2674.8,1200.5 2682.2,1201.3 C2689.5,1202.1 2700.1,1202.5 2706.6,1201.3 C2713.1,1200.1 2717.0,1196.0 2721.3,1194.0 C2725.5,1191.9 2730.2,1189.9 2732.0,1189.1"/>
    <path stroke="#3368f5" d="M1025.0,2003.0 C1038.2,2003.0 1089.2,2003.5 1104.0,2003.0 C1114.0,2002.2 1110.7,1998.0 1114.0,1998.0 C1117.3,1998.0 1117.0,2002.2 1124.0,2003.0 C1131.0,2003.5 1148.3,2003.5 1156.0,2003.0 C1163.7,2001.0 1165.3,1991.0 1170.0,1991.0 C1174.7,1991.0 1170.0,2001.0 1184.0,2003.0 C1227.0,2003.5 1385.3,2003.5 1428.0,2003.0 C1440.0,2001.5 1436.0,1994.0 1440.0,1994.0 C1444.0,1994.0 1440.0,2001.5 1452.0,2003.0 C1469.7,2003.5 1528.3,2003.5 1546.0,2003.0 C1558.0,2001.3 1554.0,1993.0 1558.0,1993.0 C1562.0,1993.0 1558.0,2001.3 1570.0,2003.0 C1608.5,2003.5 1748.3,2003.5 1789.0,2003.0 C1814.0,2001.7 1805.7,1995.0 1814.0,1995.0 C1822.3,1995.0 1828.3,2001.7 1839.0,2003.0 C1849.7,2003.5 1869.5,2003.5 1878.0,2003.0 C1886.5,2002.0 1886.0,1997.0 1890.0,1997.0 C1894.0,1997.0 1890.0,2002.0 1902.0,2003.0 C1937.0,2003.5 2065.3,2003.5 2100.0,2003.0 C2110.0,2002.2 2106.6,1998.0 2110.0,1998.0 C2113.4,1998.0 2117.0,2003.5 2120.3,2002.8 C2123.6,1996.8 2127.2,1980.4 2130.1,1962.2 C2132.9,1944.0 2134.7,1921.5 2137.4,1893.8 C2140.1,1866.1 2143.3,1804.2 2146.2,1796.1 C2149.0,1787.9 2151.5,1830.3 2154.5,1844.9 C2157.5,1859.6 2160.6,1873.4 2164.3,1884.0 C2167.9,1894.6 2172.8,1904.1 2176.5,1908.5 C2180.1,1912.8 2183.0,1908.3 2186.3,1909.9 C2189.5,1911.6 2193.2,1926.6 2196.0,1918.2 C2198.9,1909.8 2200.5,1885.7 2203.4,1859.6 C2206.2,1833.5 2209.9,1792.0 2213.1,1761.9 C2216.4,1731.8 2220.0,1695.9 2222.9,1678.8 C2225.8,1661.7 2227.8,1669.9 2230.2,1659.3 C2232.7,1648.7 2234.9,1630.9 2237.6,1615.3 C2240.2,1599.7 2243.5,1571.2 2246.4,1565.5 C2249.2,1559.8 2252.1,1568.7 2254.7,1581.1 C2257.3,1593.5 2259.1,1609.6 2262.0,1639.7 C2264.8,1669.9 2269.3,1721.2 2271.8,1761.9 C2274.2,1802.6 2274.2,1853.9 2276.6,1884.0 C2279.1,1914.2 2282.3,1924.7 2286.4,1942.7 C2290.5,1960.6 2297.4,1981.5 2301.1,1991.5 C2304.7,2001.5 2308.4,2000.8 2308.4,2002.8 C2308.2,2003.5 2300.0,2003.0 2300.0,2003.0 C2318.6,2003.0 2398.3,2003.5 2420.0,2003.0 C2430.0,2002.2 2426.7,1998.0 2430.0,1998.0 C2433.3,1998.0 2430.0,2002.2 2440.0,2003.0 C2476.7,2003.5 2613.3,2003.5 2650.0,2003.0 C2660.0,2002.3 2656.7,1999.0 2660.0,1999.0 C2663.3,1999.0 2660.0,2002.3 2670.0,2003.0 C2682.0,2003.5 2721.7,2003.0 2732.0,2003.0"/>
    <path stroke="#5ac8fa" d="M1025.0,2003.0 C1025.0,2003.0 1025.0,2003.5 1025.0,2003.0 C1027.5,2002.3 1035.0,1999.0 1040.0,1999.0 C1045.0,1999.0 1040.0,2002.3 1055.0,2003.0 C1071.7,2003.5 1120.8,2003.5 1140.0,2003.0 C1159.2,2001.5 1160.0,1994.0 1170.0,1994.0 C1180.0,1994.0 1190.8,2001.5 1200.0,2003.0 C1209.2,2003.5 1218.3,2003.5 1225.0,2003.0 C1231.7,2002.5 1235.0,2000.0 1240.0,2000.0 C1245.0,2000.0 1240.0,2002.5 1255.0,2003.0 C1275.2,2003.5 1341.3,2003.5 1361.0,2003.0 C1373.0,2001.8 1369.0,1996.0 1373.0,1996.0 C1377.0,1996.0 1373.0,2001.8 1385.0,2003.0 C1399.2,2003.5 1443.3,2003.5 1458.0,2003.0 C1472.7,2002.2 1468.0,1998.0 1473.0,1998.0 C1478.0,1998.0 1481.5,2002.2 1488.0,2003.0 C1494.5,2003.5 1505.5,2003.5 1512.0,2003.0 C1518.5,2002.3 1522.0,1999.0 1527.0,1999.0 C1532.0,1999.0 1536.7,2002.3 1542.0,2003.0 C1547.3,2003.5 1553.7,2003.5 1559.0,2003.0 C1564.3,2002.3 1569.0,1999.0 1574.0,1999.0 C1579.0,1999.0 1581.8,2002.3 1589.0,2003.0 C1596.2,2003.5 1609.8,2003.5 1617.0,2003.0 C1624.2,2002.3 1627.0,1999.0 1632.0,1999.0 C1637.0,1999.0 1634.7,2002.3 1647.0,2003.0 C1659.3,2003.5 1693.7,2003.5 1706.0,2003.0 C1718.3,2002.3 1716.0,1999.0 1721.0,1999.0 C1726.0,1999.0 1730.8,2002.3 1736.0,2003.0 C1741.2,2003.5 1746.8,2003.5 1752.0,2003.0 C1757.2,2002.0 1762.0,1997.0 1767.0,1997.0 C1772.0,1997.0 1780.7,2002.0 1782.0,2003.0 C1782.0,2003.5 1775.0,2003.5 1775.0,2003.0 C1775.5,2002.2 1781.7,1998.0 1785.0,1998.0 C1788.3,1998.0 1789.3,2002.2 1795.0,2003.0 C1800.7,2003.5 1812.0,2003.5 1819.0,2003.0 C1826.0,2001.5 1831.0,1994.0 1837.0,1994.0 C1843.0,1994.0 1848.7,2001.5 1855.0,2003.0 C1861.3,2003.5 1869.2,2003.5 1875.0,2003.0 C1880.8,2001.8 1885.0,1996.0 1890.0,1996.0 C1895.0,1996.0 1890.0,2001.8 1905.0,2003.0 C1929.2,2003.5 2010.8,2003.5 2035.0,2003.0 C2050.0,2002.2 2045.0,1998.0 2050.0,1998.0 C2055.0,1998.0 2058.7,2002.2 2065.0,2003.0 C2071.3,2003.5 2082.2,2003.5 2088.0,2003.0 C2093.8,2001.8 2096.0,1996.0 2100.0,1996.0 C2104.0,1996.0 2100.0,2001.8 2112.0,2003.0 C2148.3,2003.5 2281.7,2003.5 2318.0,2003.0 C2330.0,2002.0 2326.0,1997.0 2330.0,1997.0 C2334.0,1997.0 2330.0,2002.0 2342.0,2003.0 C2366.7,2003.5 2453.3,2003.5 2478.0,2003.0 C2490.0,2002.3 2486.0,1999.0 2490.0,1999.0 C2494.0,1999.0 2492.3,2002.3 2502.0,2003.0 C2511.7,2003.5 2538.3,2003.5 2548.0,2003.0 C2557.7,2002.5 2556.0,2000.0 2560.0,2000.0 C2564.0,2000.0 2560.0,2002.5 2572.0,2003.0 C2593.3,2003.5 2666.7,2003.5 2688.0,2003.0 C2700.0,2002.5 2696.0,2000.0 2700.0,2000.0 C2704.0,2000.0 2706.7,2002.5 2712.0,2003.0 C2717.3,2003.5 2728.7,2003.0 2732.0,2003.0"/>
    <path stroke="#b030c0" d="M1025.0,832.4 C1027.0,832.4 1034.0,836.0 1037.2,832.4 C1040.5,828.7 1041.7,820.6 1044.5,810.4 C1047.4,800.2 1051.1,780.9 1054.3,771.3 C1057.6,761.7 1060.0,755.8 1064.1,752.7 C1068.2,749.7 1075.1,754.1 1078.7,752.7 C1082.4,751.4 1082.8,748.8 1086.1,744.4 C1089.3,740.0 1094.6,728.0 1098.3,726.4 C1101.9,724.7 1104.8,728.8 1108.1,734.7 C1111.3,740.5 1114.6,748.9 1117.8,761.5 C1121.1,774.2 1124.3,794.1 1127.6,810.4 C1130.9,826.7 1134.1,847.0 1137.4,859.3 C1140.6,871.5 1143.9,872.3 1147.1,883.7 C1150.4,895.1 1153.7,912.2 1156.9,927.7 C1160.2,943.1 1163.4,957.0 1166.7,976.5 C1169.9,996.1 1173.2,1018.9 1176.5,1044.9 C1179.7,1071.0 1183.4,1107.0 1186.2,1132.9 C1189.1,1158.7 1189.5,1172.5 1193.6,1200.0 C1197.6,1227.5 1205.4,1265.1 1210.7,1297.7 C1215.9,1330.3 1219.6,1354.7 1225.3,1395.4 C1231.0,1436.1 1239.2,1493.1 1244.9,1542.0 C1250.6,1590.9 1255.0,1631.6 1259.5,1688.6 C1264.0,1745.6 1267.8,1831.9 1271.7,1884.0 C1275.6,1936.1 1280.1,1985.0 1283.0,2001.3 C1285.8,2003.5 1285.8,2003.5 1288.8,1981.7 C1291.8,1954.0 1297.0,1900.3 1301.0,1835.1 C1305.1,1770.0 1309.6,1664.1 1313.3,1590.9 C1316.9,1517.6 1319.8,1460.6 1323.0,1395.4 C1326.3,1330.3 1329.5,1251.9 1332.8,1200.0 C1336.1,1148.1 1339.3,1127.8 1342.6,1084.0 C1345.8,1040.2 1349.1,986.3 1352.3,937.4 C1355.6,888.6 1359.7,818.5 1362.1,790.9 C1364.6,763.2 1363.7,780.3 1367.0,771.3 C1370.3,762.4 1376.8,748.1 1381.7,737.1 C1386.5,726.1 1391.4,705.4 1396.3,705.4 C1401.2,705.4 1406.1,726.1 1411.0,737.1 C1415.9,748.1 1421.6,764.1 1425.6,771.3 C1429.7,778.5 1432.1,780.9 1435.4,780.1 C1438.7,779.3 1442.3,771.0 1445.2,766.4 C1448.0,761.9 1448.4,755.0 1452.5,752.7 C1456.6,750.5 1464.7,756.2 1469.6,752.7 C1474.5,749.3 1477.7,741.3 1481.8,732.2 C1485.9,723.1 1490.0,707.6 1494.0,698.0 C1498.1,688.4 1502.6,678.2 1506.2,674.6 C1509.9,670.9 1512.8,672.5 1516.0,676.0 C1519.3,679.5 1522.1,695.8 1525.8,695.6 C1529.4,695.3 1525.8,678.1 1538.0,674.6 C1557.9,671.1 1625.9,671.1 1645.5,674.6 C1655.3,678.1 1652.0,691.7 1655.3,695.6 C1658.5,699.5 1661.0,701.5 1665.0,698.0 C1669.1,694.5 1670.7,678.5 1679.7,674.6 C1688.6,670.7 1709.8,670.5 1718.8,674.6 C1727.7,678.6 1726.1,694.7 1733.4,699.0 C1740.8,703.3 1754.6,693.3 1762.7,700.5 C1770.9,707.6 1777.4,728.6 1782.3,742.0 C1787.2,755.4 1788.8,764.8 1792.1,781.1 C1795.3,797.4 1799.4,821.8 1801.8,839.7 C1804.3,857.6 1804.7,873.9 1806.7,888.6 C1808.7,903.2 1811.6,920.3 1814.0,927.7 C1816.5,935.0 1818.5,939.1 1821.4,932.5 C1824.2,926.0 1828.3,895.9 1831.1,888.6 C1834.0,881.2 1835.2,884.9 1838.5,888.6 C1841.7,892.2 1845.8,906.5 1850.7,910.6 C1855.6,914.6 1863.6,911.4 1867.8,913.0 C1872.0,914.6 1873.0,912.2 1876.0,920.3 C1879.0,928.5 1882.5,942.7 1885.8,961.9 C1889.0,981.0 1892.3,1006.7 1895.5,1035.2 C1898.8,1063.7 1902.5,1105.4 1905.3,1132.9 C1908.2,1160.4 1910.2,1178.2 1912.6,1200.0 C1915.1,1221.8 1916.3,1246.4 1920.0,1263.5 C1923.6,1280.6 1931.4,1288.8 1934.6,1302.6 C1937.9,1316.4 1937.1,1306.7 1939.5,1346.6 C1942.0,1386.5 1946.0,1486.6 1949.3,1542.0 C1952.5,1597.4 1956.9,1654.0 1959.1,1678.8 C1961.3,1703.7 1960.6,1695.9 1962.5,1691.0 C1964.4,1686.1 1967.6,1641.8 1970.3,1649.5 C1973.0,1657.2 1974.8,1698.4 1978.6,1737.5 C1982.4,1776.5 1989.2,1839.8 1993.3,1884.0 C1997.3,1928.2 1993.3,1983.0 2003.0,2002.8 C2044.2,2003.5 2198.5,2003.5 2240.0,2002.8 C2252.2,1966.7 2247.7,1834.6 2252.2,1786.3 C2256.7,1738.0 2261.2,1741.5 2266.9,1713.0 C2272.6,1684.5 2281.5,1651.9 2286.4,1615.3 C2291.3,1578.7 2292.1,1537.9 2296.2,1493.2 C2300.3,1448.4 2305.1,1395.4 2310.8,1346.6 C2316.5,1297.7 2325.9,1239.7 2330.4,1200.0 C2334.9,1160.3 2335.3,1130.2 2337.7,1108.5 C2340.2,1086.7 2342.6,1079.5 2345.0,1069.4 C2347.5,1059.2 2349.9,1051.5 2352.4,1047.4 C2354.8,1043.3 2356.9,1048.6 2359.7,1044.9 C2362.6,1041.3 2366.6,1033.5 2369.5,1025.4 C2372.3,1017.3 2374.4,1004.9 2376.8,996.1 C2379.2,987.3 2381.4,973.9 2384.1,972.6 C2386.8,971.4 2388.9,991.8 2392.9,988.8 C2397.0,985.7 2403.5,966.4 2408.6,954.6 C2413.6,942.7 2419.2,929.7 2423.2,917.9 C2427.3,906.1 2429.7,896.7 2433.0,883.7 C2436.3,870.7 2439.5,852.8 2442.8,839.7 C2446.0,826.7 2449.3,815.3 2452.5,805.5 C2455.8,795.8 2456.2,785.2 2462.3,781.1 C2468.4,777.0 2482.7,777.0 2489.2,781.1 C2495.7,785.2 2497.5,797.6 2501.4,805.5 C2505.3,813.5 2509.0,828.2 2512.6,829.0 C2516.3,829.8 2519.6,814.5 2523.4,810.4 C2527.2,806.3 2531.5,809.4 2535.6,804.6 C2539.7,799.7 2544.6,785.4 2547.8,781.1 C2551.1,776.8 2551.9,783.5 2555.1,778.7 C2558.4,773.8 2563.3,760.3 2567.4,751.8 C2571.4,743.2 2574.7,731.6 2579.6,727.4 C2584.5,723.1 2591.6,730.0 2596.7,726.4 C2601.7,722.7 2605.4,705.2 2609.9,705.4 C2614.3,705.5 2609.9,723.7 2623.5,727.4 C2643.9,731.0 2713.9,727.4 2732.0,727.4"/>
    <path stroke="#ffe21a" d="M1025.0,1532.2 C1028.7,1535.1 1040.5,1549.3 1047.0,1549.3 C1053.5,1549.3 1059.6,1536.7 1064.1,1532.2 C1068.6,1527.7 1070.2,1532.2 1073.9,1522.5 C1077.5,1512.7 1082.8,1483.4 1086.1,1473.6 C1089.3,1463.8 1090.5,1480.9 1093.4,1463.8 C1096.2,1446.7 1099.1,1394.6 1103.2,1371.0 C1107.2,1347.4 1113.3,1340.9 1117.8,1322.1 C1122.3,1303.4 1126.0,1277.3 1130.0,1258.6 C1134.1,1239.9 1138.6,1243.2 1142.3,1210.0 C1145.9,1176.9 1148.8,1109.1 1152.0,1059.6 C1155.3,1010.1 1158.8,946.4 1161.8,913.0 C1164.8,879.6 1167.7,861.7 1170.1,859.3 C1172.5,856.8 1174.2,873.1 1176.5,898.3 C1178.7,923.6 1181.3,971.6 1183.8,1010.7 C1186.2,1049.8 1188.7,1107.6 1191.1,1132.9 C1193.6,1158.1 1196.0,1154.8 1198.4,1162.2 C1200.9,1169.5 1203.9,1174.8 1205.8,1176.8 C1207.6,1178.9 1208.5,1170.5 1209.7,1174.4 C1210.9,1178.2 1211.3,1179.4 1213.1,1200.0 C1214.9,1220.6 1218.0,1261.1 1220.4,1297.7 C1222.9,1334.4 1225.5,1382.4 1227.8,1419.9 C1230.0,1457.3 1232.5,1502.9 1234.1,1522.5 C1235.7,1542.0 1235.7,1542.0 1237.5,1537.1 C1239.3,1532.2 1242.4,1516.8 1244.9,1493.1 C1247.3,1469.5 1249.7,1423.9 1252.2,1395.4 C1254.6,1366.9 1257.1,1340.1 1259.5,1322.1 C1262.0,1304.2 1264.4,1294.5 1266.8,1287.9 C1269.3,1281.4 1271.3,1284.3 1274.2,1283.1 C1277.0,1281.8 1281.1,1283.1 1283.9,1280.6 C1286.8,1278.2 1288.8,1274.1 1291.3,1268.4 C1293.7,1262.7 1295.7,1251.3 1298.6,1246.4 C1301.4,1241.5 1305.1,1241.1 1308.4,1239.1 C1311.6,1237.0 1315.3,1238.3 1318.1,1234.2 C1321.0,1230.1 1323.0,1231.5 1325.5,1214.7 C1327.9,1197.8 1330.4,1151.8 1332.8,1132.9 C1335.2,1113.9 1338.1,1101.1 1340.1,1101.1 C1342.2,1101.1 1343.8,1116.4 1345.0,1132.9 C1346.2,1149.3 1346.2,1156.2 1347.5,1200.0 C1348.7,1243.8 1349.9,1322.1 1352.3,1395.4 C1354.8,1468.7 1358.9,1574.6 1362.1,1639.7 C1365.4,1704.9 1368.6,1737.4 1371.9,1786.3 C1375.1,1835.1 1378.8,1897.8 1381.7,1932.9 C1384.5,1967.9 1387.2,1984.7 1389.0,1996.4 C1390.8,2003.5 1391.2,2003.5 1392.4,2002.7 C1393.6,2000.3 1394.8,2003.5 1396.3,1981.7 C1397.8,1953.8 1399.6,1892.1 1401.2,1835.1 C1402.8,1778.1 1404.5,1679.6 1406.1,1639.7 C1407.7,1599.8 1408.9,1598.6 1411.0,1595.7 C1413.0,1592.9 1415.9,1623.4 1418.3,1622.6 C1420.7,1621.8 1422.8,1604.3 1425.6,1590.9 C1428.5,1577.4 1432.1,1559.1 1435.4,1542.0 C1438.7,1524.9 1442.3,1500.1 1445.2,1488.3 C1448.0,1476.4 1450.1,1472.0 1452.5,1471.2 C1454.9,1470.3 1457.0,1471.6 1459.8,1483.4 C1462.7,1495.2 1466.3,1529.8 1469.6,1542.0 C1472.9,1554.2 1475.7,1554.6 1479.4,1556.7 C1483.0,1558.7 1487.5,1557.5 1491.6,1554.2 C1495.7,1551.0 1500.1,1535.1 1503.8,1537.1 C1507.5,1539.1 1510.3,1558.3 1513.6,1566.4 C1516.8,1574.6 1520.5,1577.8 1523.3,1586.0 C1526.2,1594.1 1528.1,1604.3 1530.7,1615.3 C1533.3,1626.3 1536.1,1649.5 1539.0,1651.9 C1541.8,1654.4 1543.9,1636.5 1547.8,1629.9 C1551.7,1623.4 1557.5,1616.9 1562.4,1612.8 C1567.3,1608.8 1573.0,1613.2 1577.1,1605.5 C1581.2,1597.8 1584.0,1581.1 1586.9,1566.4 C1589.7,1551.8 1591.3,1527.7 1594.2,1517.6 C1597.0,1507.4 1600.3,1504.1 1604.0,1505.4 C1607.6,1506.6 1612.5,1521.2 1616.2,1524.9 C1619.8,1528.6 1621.9,1530.2 1625.9,1527.3 C1630.0,1524.5 1636.9,1512.7 1640.6,1507.8 C1644.3,1502.9 1645.1,1500.5 1647.9,1498.0 C1650.8,1495.6 1654.4,1497.2 1657.7,1493.1 C1661.0,1489.1 1663.8,1484.2 1667.5,1473.6 C1671.1,1463.0 1676.0,1438.6 1679.7,1429.6 C1683.3,1420.7 1685.8,1426.4 1689.5,1419.9 C1693.1,1413.3 1698.0,1404.4 1701.7,1390.5 C1705.3,1376.7 1708.2,1358.8 1711.4,1336.8 C1714.7,1314.8 1716.7,1293.4 1721.2,1258.6 C1725.7,1223.8 1733.8,1153.8 1738.3,1128.0 C1742.8,1102.1 1744.0,1110.1 1748.1,1103.5 C1752.2,1097.0 1757.9,1093.0 1762.7,1088.9 C1767.6,1084.8 1773.7,1081.1 1777.4,1079.1 C1781.1,1077.1 1781.6,1079.1 1784.7,1076.7 C1787.8,1074.2 1792.7,1060.8 1796.0,1064.5 C1799.2,1068.1 1801.7,1088.1 1804.3,1098.7 C1806.9,1109.2 1809.2,1123.9 1811.6,1128.0 C1814.0,1132.0 1816.1,1132.0 1818.9,1123.1 C1821.8,1114.1 1825.8,1097.0 1828.7,1074.2 C1831.5,1051.4 1833.6,1017.2 1836.0,986.3 C1838.5,955.3 1840.9,921.1 1843.4,888.6 C1845.8,856.0 1848.2,821.8 1850.7,790.9 C1853.1,759.9 1855.7,723.7 1858.0,702.9 C1860.3,682.1 1862.3,669.5 1864.4,666.3 C1866.4,663.0 1868.3,680.5 1870.2,683.4 C1872.2,686.2 1873.4,690.7 1876.0,683.4 C1878.6,676.1 1882.5,650.0 1885.8,639.4 C1889.0,628.8 1892.7,623.5 1895.5,619.9 C1898.4,616.2 1900.8,621.5 1902.9,617.4 C1904.9,613.4 1905.7,603.2 1907.8,595.4 C1909.8,587.7 1912.9,569.4 1915.1,571.0 C1917.3,572.6 1918.9,584.4 1921.0,605.2 C1923.0,626.0 1925.4,687.5 1927.3,695.6 C1929.2,703.7 1930.4,674.4 1932.2,654.1 C1934.0,633.7 1936.4,581.6 1938.1,573.4 C1939.7,565.3 1940.5,577.1 1942.0,605.2 C1943.4,633.3 1944.8,704.6 1946.8,742.0 C1948.9,779.5 1951.7,810.8 1954.2,830.0 C1956.6,849.1 1957.4,853.2 1961.5,856.8 C1965.6,860.5 1974.5,859.7 1978.6,851.9 C1982.7,844.2 1983.5,828.7 1985.9,810.4 C1988.4,792.1 1990.8,777.8 1993.3,742.0 C1995.7,706.2 1998.8,642.6 2000.6,595.4 C2002.4,548.3 2003.1,484.4 2004.0,459.0 C2005.0,433.7 2005.4,448.0 2006.3,443.3 C2007.2,438.5 2008.3,434.5 2009.5,430.6 C2010.7,426.6 2011.8,422.6 2013.4,419.6 C2015.0,416.6 2016.0,413.5 2019.0,412.4 C2022.0,411.3 2029.0,412.0 2031.6,413.2 C2034.2,414.4 2034.0,414.6 2034.8,419.6 C2035.6,424.6 2035.9,434.1 2036.4,443.3 C2036.9,452.5 2037.1,441.5 2038.0,475.0 C2039.0,508.5 2040.2,591.6 2042.1,644.3 C2044.0,696.9 2047.0,758.3 2049.4,790.9 C2051.9,823.4 2054.7,807.2 2056.8,839.7 C2058.8,872.3 2060.0,937.5 2061.7,986.3 C2063.3,1035.2 2064.9,1097.3 2066.6,1132.9 C2068.2,1168.5 2069.4,1172.5 2071.4,1200.0 C2073.5,1227.5 2076.7,1248.9 2078.8,1297.7 C2080.8,1346.6 2082.0,1411.7 2083.7,1493.2 C2085.3,1574.6 2086.9,1704.9 2088.5,1786.3 C2090.2,1867.7 2091.8,1945.7 2093.4,1981.7 C2095.1,2003.5 2093.8,1999.3 2098.3,2002.8 C2102.8,2003.5 2115.0,2003.5 2120.3,2002.8 C2125.6,1991.1 2127.2,1977.1 2130.1,1932.9 C2132.9,1888.7 2135.0,1802.6 2137.4,1737.5 C2139.8,1672.3 2142.3,1558.3 2144.7,1542.0 C2147.2,1525.7 2149.6,1590.9 2152.1,1639.7 C2154.5,1688.6 2156.5,1775.7 2159.4,1835.2 C2162.2,1894.6 2165.9,1968.5 2169.2,1996.4 C2172.4,2003.5 2169.2,2001.7 2178.9,2002.8 C2208.2,2003.5 2316.1,2003.5 2345.0,2002.8 C2352.4,1974.8 2349.9,1891.6 2352.4,1835.2 C2354.8,1778.7 2357.7,1697.5 2359.7,1664.2 C2361.7,1630.8 2362.6,1634.8 2364.6,1634.8 C2366.6,1634.8 2369.9,1638.9 2371.9,1664.2 C2374.0,1689.4 2375.2,1741.5 2376.8,1786.3 C2378.4,1831.1 2380.1,1896.8 2381.7,1932.9 C2383.3,1969.0 2382.9,1992.2 2386.6,2002.8 C2390.2,2003.5 2399.2,2001.5 2403.7,1996.4 C2408.2,1991.3 2410.6,1990.7 2413.5,1972.0 C2416.3,1953.2 2418.3,1916.6 2420.8,1884.0 C2423.2,1851.5 2425.4,1804.0 2428.1,1776.5 C2430.8,1749.1 2434.5,1723.4 2436.9,1719.4 C2439.3,1715.3 2440.8,1740.1 2442.8,1752.1 C2444.7,1764.1 2446.2,1795.3 2448.6,1791.2 C2451.1,1787.1 2454.3,1746.4 2457.4,1727.7 C2460.5,1708.9 2463.5,1694.3 2467.2,1678.8 C2470.9,1663.3 2475.7,1653.6 2479.4,1634.8 C2483.1,1616.1 2485.9,1589.2 2489.2,1566.4 C2492.4,1543.6 2496.1,1502.9 2499.0,1498.0 C2501.8,1493.2 2503.8,1513.5 2506.3,1537.1 C2508.7,1560.7 2511.2,1608.0 2513.6,1639.7 C2516.1,1671.5 2518.7,1708.9 2520.9,1727.7 C2523.1,1746.4 2524.4,1748.4 2526.8,1752.1 C2529.2,1755.8 2529.2,1753.3 2535.6,1749.7 C2542.0,1746.0 2554.3,1732.2 2564.9,1730.1 C2575.5,1728.1 2591.0,1736.8 2599.1,1737.5 C2607.3,1738.1 2608.5,1734.6 2613.8,1734.0 C2619.1,1733.5 2626.2,1732.2 2630.9,1734.0 C2635.6,1735.8 2638.4,1747.1 2642.1,1744.8 C2645.8,1742.5 2649.4,1724.0 2652.9,1720.3 C2656.3,1716.7 2659.8,1726.5 2662.6,1722.8 C2665.5,1719.1 2667.5,1707.3 2670.0,1698.4 C2672.4,1689.4 2674.4,1675.2 2677.3,1669.0 C2680.1,1662.9 2683.8,1668.2 2687.1,1661.7 C2690.3,1655.2 2693.6,1642.6 2696.8,1630.0 C2700.1,1617.3 2703.3,1597.4 2706.6,1586.0 C2709.9,1574.6 2712.1,1566.9 2716.4,1561.6 C2720.6,1556.3 2729.4,1555.5 2732.0,1554.2"/>
  </g>
  <!-- cursor -->
  <line x1="1877" y1="240" x2="1877" y2="2003" stroke="#c8c8c8" stroke-width="2"/>
  <g fill="#fff" font-size="28" letter-spacing="1.2" text-anchor="middle" font-family="Liberation Sans">
    <text x="1877.6" y="435">00:00:28.852</text>
    <text x="1459.6" y="2039">00:00:25.000</text>
    <text x="2001.6" y="2039">00:00:30.000</text>
    <text x="2543.6" y="2039">00:00:35.000</text>
  </g>
</svg>
</body></html>
